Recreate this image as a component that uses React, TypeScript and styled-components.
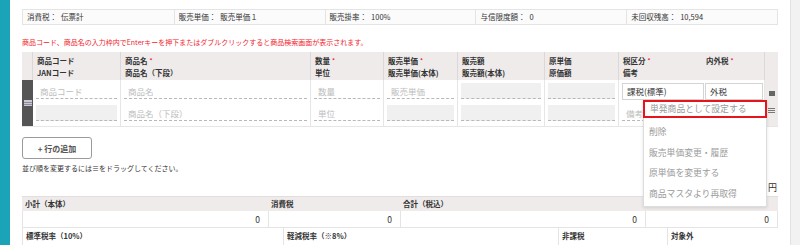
import styled, { createGlobalStyle } from "styled-components";

const GlobalStyle = createGlobalStyle`
  html, body {
    margin: 0;
    padding: 0;
    background: #ffffff;
    font-family: "Noto Sans CJK JP", "Liberation Sans", sans-serif;
    color: #333333;
  }
`;

const infoItems = [
  { label: "消費税：", value: "伝票計" },
  { label: "販売単価：", value: "販売単価１" },
  { label: "販売掛率：", value: "100%" },
  { label: "与信限度額：", value: "0" },
  { label: "未回収残高：", value: "10,594" },
];

const menuItems = ["削除", "販売単価変更・履歴", "原単価を変更する", "商品マスタより再取得"];

const App = () => {
  return (
    <>
      <GlobalStyle />
      <Page>
        <Sidebar />
        <Main>
          <InfoBar>
            {infoItems.map((item) => (
              <InfoCell key={item.label}>
                <span>{item.label}</span>
                <span>{item.value}</span>
              </InfoCell>
            ))}
          </InfoBar>

          <Notice>
            商品コード、商品名の入力枠内でEnterキーを押下またはダブルクリックすると商品検索画面が表示されます。
          </Notice>

          <TableWrap>
            <ItemGrid>
              <HeadCell />
              <HeadCell>
                <div>商品コード</div>
                <div>JANコード</div>
              </HeadCell>
              <HeadCell>
                <div>
                  商品名<Req>*</Req>
                </div>
                <div>商品名（下段）</div>
              </HeadCell>
              <HeadCell>
                <div>
                  数量<Req>*</Req>
                </div>
                <div>単位</div>
              </HeadCell>
              <HeadCell>
                <div>
                  販売単価<Req>*</Req>
                </div>
                <div>販売単価(本体)</div>
              </HeadCell>
              <HeadCell>
                <div>販売額</div>
                <div>販売額(本体)</div>
              </HeadCell>
              <HeadCell>
                <div>原単価</div>
                <div>原価額</div>
              </HeadCell>
              <HeadCell>
                <TaxHead>
                  <span>
                    税区分<Req>*</Req>
                  </span>
                  <span>
                    内外税<Req>*</Req>
                  </span>
                </TaxHead>
                <div>備考</div>
              </HeadCell>
              <HeadCell $last />

              <Handle>
                <svg width="8" height="6" viewBox="0 0 8 6">
                  <rect x="0" y="0" width="8" height="6" fill="#c9c9d4" />
                  <rect x="0" y="2" width="8" height="1" fill="#8d8d99" />
                  <rect x="0" y="4" width="8" height="1" fill="#8d8d99" />
                </svg>
              </Handle>

              <BodyCell>
                <Field>商品コード</Field>
              </BodyCell>
              <BodyCell>
                <Field>商品名</Field>
              </BodyCell>
              <BodyCell>
                <Field>数量</Field>
              </BodyCell>
              <BodyCell>
                <Field>販売単価</Field>
              </BodyCell>
              <BodyCell>
                <Field $disabled />
              </BodyCell>
              <BodyCell>
                <Field $disabled />
              </BodyCell>
              <BodyCell>
                <SelectRow>
                  <Select $grow={85}>課税(標準)</Select>
                  <Select $grow={58}>外税</Select>
                </SelectRow>
              </BodyCell>

              <ActionCol>
                <svg width="6" height="5" viewBox="0 0 6 5">
                  <rect width="6" height="5" fill="#666666" />
                </svg>
                <svg width="7" height="5" viewBox="0 0 7 5">
                  <rect y="0" width="7" height="1" fill="#777777" />
                  <rect y="2" width="7" height="1" fill="#777777" />
                  <rect y="4" width="7" height="1" fill="#777777" />
                </svg>
              </ActionCol>

              <BodyCell $bottom>
                <Field $disabled />
              </BodyCell>
              <BodyCell $bottom>
                <Field>商品名（下段）</Field>
              </BodyCell>
              <BodyCell $bottom>
                <Field>単位</Field>
              </BodyCell>
              <BodyCell $bottom>
                <Field $disabled />
              </BodyCell>
              <BodyCell $bottom>
                <Field $disabled />
              </BodyCell>
              <BodyCell $bottom>
                <Field $disabled />
              </BodyCell>
              <BodyCell $bottom>
                <Field>備考</Field>
              </BodyCell>
            </ItemGrid>

            <Menu>
              <MenuItem $active>単発商品として設定する</MenuItem>
              {menuItems.map((m) => (
                <MenuItem key={m}>{m}</MenuItem>
              ))}
            </Menu>
          </TableWrap>

          <AddButton>+ 行の追加</AddButton>
          <DragNote>並び順を変更するには≡をドラッグしてください。</DragNote>

          <Yen>円</Yen>

          <SumGrid $cols="246px 132px 245px 133px">
            <SumHead>小計（本体）</SumHead>
            <SumHead>消費税</SumHead>
            <SumHead>合計（税込）</SumHead>
            <SumHead />
            <SumValue>0</SumValue>
            <SumValue>0</SumValue>
            <SumValue>0</SumValue>
            <SumValue>0</SumValue>
          </SumGrid>
          <SumGrid $cols="261px 275px 109px 111px">
            <RateHead>標準税率（10%）</RateHead>
            <RateHead>軽減税率（※8%）</RateHead>
            <RateHead>非課税</RateHead>
            <RateHead>対象外</RateHead>
          </SumGrid>
        </Main>
        <ScrollStrip />
      </Page>
    </>
  );
};

export default App;

const Page = styled.div`
  display: flex;
  height: 245px;
  overflow: hidden;
`;

const Sidebar = styled.div`
  width: 10px;
  flex-shrink: 0;
  background: #1ba4b8;
`;

const ScrollStrip = styled.div`
  width: 9px;
  flex-shrink: 0;
  background: #f2f2f2;
  border-left: 1px solid #e3e3e3;
`;

const Main = styled.div`
  flex: 1;
  padding: 9px 12px 0;
  min-width: 0;
`;

const InfoBar = styled.div`
  display: grid;
  grid-template-columns: repeat(5, 1fr);
  height: 14px;
  border: 1px solid #e4e4e4;
  background: #fbfbfb;
`;

const InfoCell = styled.div`
  display: flex;
  gap: 4px;
  padding: 0 4px;
  font-size: 7.5px;
  line-height: 14px;
  color: #333333;
  & + & {
    border-left: 1px solid #e4e4e4;
  }
`;

const Notice = styled.div`
  margin-top: 12px;
  font-size: 7px;
  line-height: 10px;
  color: #f0262e;
  white-space: nowrap;
`;

const TableWrap = styled.div`
  position: relative;
  margin-top: 5px;
`;

const ItemGrid = styled.div`
  display: grid;
  grid-template-columns: 11px 88px 190px 73px 74px 87px 74px 146px 13px;
  grid-template-rows: 28px 23px 23px;
  border: 1px solid #e6e6e6;
  border-top: none;
  border-left: none;
`;

const HeadCell = styled.div<{ $last?: boolean }>`
  background: #efebeb;
  border-right: ${(p) => (p.$last ? "none" : "1px solid #dcd8d8")};
  padding: 3px 4px 0;
  font-size: 7.5px;
  line-height: 12px;
  font-weight: 700;
  color: #333333;
  white-space: nowrap;
`;

const TaxHead = styled.div`
  display: flex;
  & > span:first-child {
    width: 83px;
  }
`;

const Req = styled.span`
  color: #f0262e;
  font-size: 6px;
  vertical-align: top;
  margin-left: 2px;
`;

const Handle = styled.div`
  grid-row: 2 / span 2;
  grid-column: 1;
  background: #555555;
  display: flex;
  align-items: center;
  justify-content: center;
`;

const ActionCol = styled.div`
  grid-row: 2 / span 2;
  grid-column: 9;
  background: #efebeb;
  display: flex;
  flex-direction: column;
  align-items: center;
  gap: 12px;
  padding-top: 11px;
`;

const BodyCell = styled.div<{ $bottom?: boolean }>`
  border-right: 1px solid #e6e6e6;
  padding: 3px 3px 0;
  ${(p) => (p.$bottom ? "padding-top: 2px;" : "")}
`;

const Field = styled.div<{ $disabled?: boolean }>`
  height: 16px;
  box-sizing: border-box;
  padding-left: 4px;
  background: ${(p) => (p.$disabled ? "#f0f0f0" : "#ffffff")};
  border-bottom: 1px dashed #b8b8b8;
  font-size: 8.5px;
  line-height: 16px;
  color: #bdbdbd;
  white-space: nowrap;
  overflow: hidden;
`;

const SelectRow = styled.div`
  display: flex;
  gap: 1px;
  margin-right: -2px;
`;

const Select = styled.div<{ $grow: number }>`
  flex: ${(p) => p.$grow};
  height: 17px;
  box-sizing: border-box;
  border: 1px solid #d4d4d4;
  padding-left: 4px;
  font-size: 8.5px;
  line-height: 15px;
  color: #333333;
  background: #ffffff;
`;

const Menu = styled.div`
  position: absolute;
  left: 621px;
  top: 48px;
  width: 124px;
  box-sizing: border-box;
  background: #ffffff;
  border: 1px solid #dddddd;
  box-shadow: 0 1px 3px rgba(0, 0, 0, 0.12);
  padding-bottom: 2px;
`;

const MenuItem = styled.div<{ $active?: boolean }>`
  height: ${(p) => (p.$active ? "18px" : "20.5px")};
  box-sizing: border-box;
  padding-left: 5px;
  font-size: 8.8px;
  line-height: ${(p) => (p.$active ? "14px" : "20.5px")};
  color: #9a9a9a;
  white-space: nowrap;
  border: ${(p) => (p.$active ? "2px solid #e5141d" : "none")};
  margin: ${(p) => (p.$active ? "-1px -1px 4px" : "0")};
`;

const AddButton = styled.button`
  display: block;
  margin-top: 10px;
  width: 70px;
  height: 22px;
  border: 1px solid #9a9a9a;
  border-radius: 3px;
  background: #ffffff;
  font-family: inherit;
  font-size: 8px;
  font-weight: 700;
  color: #555555;
  padding: 0;
`;

const DragNote = styled.div`
  margin-top: 4px;
  font-size: 7px;
  line-height: 10px;
  color: #333333;
`;

const Yen = styled.div`
  margin-top: 9px;
  text-align: right;
  font-size: 9px;
  line-height: 12px;
  color: #333333;
  padding-right: 1px;
`;

const SumGrid = styled.div<{ $cols: string }>`
  display: grid;
  grid-template-columns: ${(p) => p.$cols};
  margin-top: 2px;
  & + & {
    margin-top: 0;
  }
`;

const SumHead = styled.div`
  height: 14px;
  background: #efebeb;
  border-top: 1px solid #e2dede;
  padding-left: 3px;
  font-size: 7.5px;
  line-height: 13px;
  font-weight: 700;
  color: #333333;
`;

const SumValue = styled.div`
  height: 17px;
  box-sizing: border-box;
  border: 1px solid #e4e4e4;
  border-top: none;
  border-right: none;
  padding-right: 8px;
  text-align: right;
  font-size: 8.5px;
  line-height: 16px;
  color: #333333;
  &:last-child {
    border-right: 1px solid #e4e4e4;
  }
`;

const RateHead = styled.div`
  height: 20px;
  border-left: 1px solid #e4e4e4;
  padding: 2px 3px 0;
  font-size: 7.5px;
  line-height: 12px;
  font-weight: 700;
  color: #333333;
`;
